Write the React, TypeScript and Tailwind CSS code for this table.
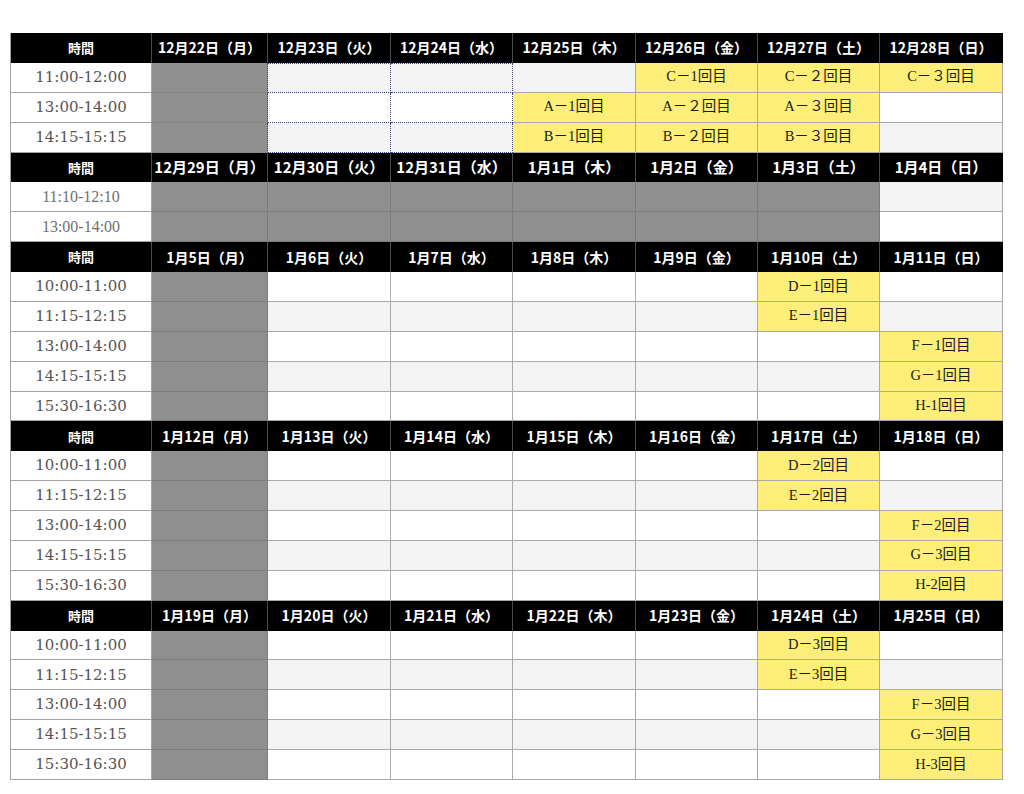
import React from 'react';

type Block = {
  days: string[];
  times: string[];
  light?: boolean;
  rows: string[][];
};

const G = 'g';

const blocks: Block[] = [
  {
    days: ['12月22日（月）', '12月23日（火）', '12月24日（水）', '12月25日（木）', '12月26日（金）', '12月27日（土）', '12月28日（日）'],
    times: ['11:00-12:00', '13:00-14:00', '14:15-15:15'],
    rows: [
      [G, '', '', '', 'C－1回目', 'C－２回目', 'C－３回目'],
      [G, '', '', 'A－1回目', 'A－２回目', 'A－３回目', ''],
      [G, '', '', 'B－1回目', 'B－２回目', 'B－３回目', ''],
    ],
  },
  {
    days: ['12月29日（月）', '12月30日（火）', '12月31日（水）', '1月1日（木）', '1月2日（金）', '1月3日（土）', '1月4日（日）'],
    times: ['11:10-12:10', '13:00-14:00'],
    light: true,
    rows: [
      [G, G, G, G, G, G, ''],
      [G, G, G, G, G, G, ''],
    ],
  },
  {
    days: ['1月5日（月）', '1月6日（火）', '1月7日（水）', '1月8日（木）', '1月9日（金）', '1月10日（土）', '1月11日（日）'],
    times: ['10:00-11:00', '11:15-12:15', '13:00-14:00', '14:15-15:15', '15:30-16:30'],
    rows: [
      [G, '', '', '', '', 'D－1回目', ''],
      [G, '', '', '', '', 'E－1回目', ''],
      [G, '', '', '', '', '', 'F－1回目'],
      [G, '', '', '', '', '', 'G－1回目'],
      [G, '', '', '', '', '', 'H-1回目'],
    ],
  },
  {
    days: ['1月12日（月）', '1月13日（火）', '1月14日（水）', '1月15日（木）', '1月16日（金）', '1月17日（土）', '1月18日（日）'],
    times: ['10:00-11:00', '11:15-12:15', '13:00-14:00', '14:15-15:15', '15:30-16:30'],
    rows: [
      [G, '', '', '', '', 'D－2回目', ''],
      [G, '', '', '', '', 'E－2回目', ''],
      [G, '', '', '', '', '', 'F－2回目'],
      [G, '', '', '', '', '', 'G－3回目'],
      [G, '', '', '', '', '', 'H-2回目'],
    ],
  },
  {
    days: ['1月19日（月）', '1月20日（火）', '1月21日（水）', '1月22日（木）', '1月23日（金）', '1月24日（土）', '1月25日（日）'],
    times: ['10:00-11:00', '11:15-12:15', '13:00-14:00', '14:15-15:15', '15:30-16:30'],
    rows: [
      [G, '', '', '', '', 'D－3回目', ''],
      [G, '', '', '', '', 'E－3回目', ''],
      [G, '', '', '', '', '', 'F－3回目'],
      [G, '', '', '', '', '', 'G－3回目'],
      [G, '', '', '', '', '', 'H-3回目'],
    ],
  },
];

const jp = { fontFamily: '"Noto Sans CJK JP", sans-serif' };
const serif = { fontFamily: '"Liberation Serif", "Noto Sans CJK JP", serif' };

function HeaderRow({ days, big }: { days: string[]; big?: boolean }) {
  return (
    <>
      <div className="bg-black border-r border-[#4a4a4a] flex items-center justify-center text-white font-bold text-[13px]" style={jp}>
        時間
      </div>
      {days.map((d, i) => (
        <div
          key={d}
          className={`bg-black flex items-center justify-center text-white font-bold whitespace-nowrap ${big ? 'text-[15px]' : 'text-[14px]'} ${i < 6 ? 'border-r border-[#4a4a4a]' : 'border-r border-black'}`}
          style={jp}
        >
          {d}
        </div>
      ))}
    </>
  );
}

function Cell({ v, shade, dotted, dottedTop, dottedRight }: { v: string; shade: boolean; dotted: boolean; dottedTop: boolean; dottedRight: boolean }) {
  if (v === G) {
    return (
      <div className={`bg-[#8f8f8f] border-b border-[#7c7c7c] ${dottedRight ? 'border-r border-r-[#3a4272] border-dotted' : 'border-r border-[#7c7c7c]'}`} />
    );
  }
  if (v) {
    return (
      <div className="bg-[#fcee78] border-r border-b border-[#a9a9a9] flex items-center justify-center text-[14.5px] text-[#1a1a1a]" style={serif}>
        {v}
      </div>
    );
  }
  if (dotted) {
    return (
      <div
        className={`${shade ? 'bg-[#f3f3f3]' : 'bg-white'} border-r border-b border-dotted border-[#3a4272] ${dottedTop ? 'border-t' : ''}`}
      />
    );
  }
  return <div className={`${shade ? 'bg-[#f3f3f3]' : 'bg-white'} border-r border-b border-[#a9a9a9]`} />;
}

export default function App() {
  return (
    <div className="bg-white w-[1024px] h-[794px] pt-[33px] pl-[10px]">
      <div className="grid grid-cols-[141px_116px_123px_122px_123px_122px_122px_123px] auto-rows-[29.88px] w-[993px] border-l border-[#a3a3a3]">
        {blocks.map((b, bi) => (
          <React.Fragment key={bi}>
            <HeaderRow days={b.days} big={b.light} />
            {b.rows.map((row, ri) => {
              const shade = bi < 2 ? ri % 2 === 0 : ri % 2 === 1;
              return (
                <React.Fragment key={ri}>
                  <div
                    className={`bg-white border-r border-b border-[#a3a3a3] flex items-center justify-center ${b.light ? 'text-[#6f6f6f] text-[16px]' : 'text-[#555] text-[15px]'}`}
                    style={{ fontFamily: b.light ? '"Liberation Serif", serif' : '"DejaVu Serif", serif' }}
                  >
                    {b.times[ri]}
                  </div>
                  {row.map((v, ci) => (
                    <Cell
                      key={ci}
                      v={v}
                      shade={shade}
                      dotted={bi === 0 && (ci === 1 || ci === 2)}
                      dottedTop={bi === 0 && ri === 0}
                      dottedRight={bi === 0 && ci === 0}
                    />
                  ))}
                </React.Fragment>
              );
            })}
          </React.Fragment>
        ))}
      </div>
    </div>
  );
}
